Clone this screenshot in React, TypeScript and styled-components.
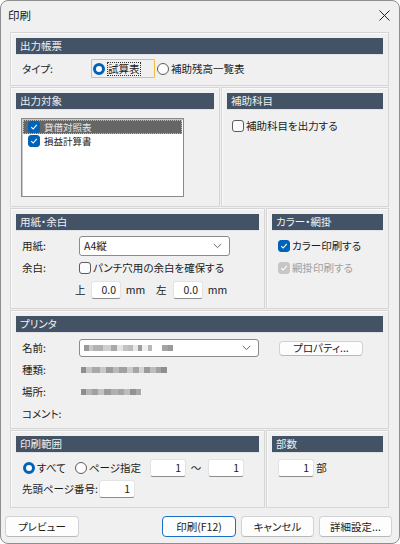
import React from "react";
import styled, { createGlobalStyle } from "styled-components";

const Global = createGlobalStyle`
  html, body { margin: 0; padding: 0; background: #ffffff; }
  body {
    font-family: "Noto Sans CJK JP", "Noto Sans", sans-serif;
    font-size: 10.5px;
    line-height: 14px;
    font-feature-settings: "palt";
    color: #1b1b1b;
  }
  * { box-sizing: border-box; }
`;

const Window = styled.div`
  width: 400px;
  height: 544px;
  border: 1px solid #8e8e8e;
  border-radius: 8px;
  background: #f0f0f0;
  display: flex;
  flex-direction: column;
  overflow: hidden;
`;

const TitleBar = styled.div`
  height: 31px;
  display: flex;
  align-items: center;
  justify-content: space-between;
  padding: 0 9px 3px 7px;
`;

const Title = styled.span`
  font-size: 11.5px;
`;

const Body = styled.div`
  display: flex;
  flex-direction: column;
  gap: 1px;
  padding: 0 10px 0 9px;
`;

const Row = styled.div<{ $cols: string }>`
  display: grid;
  grid-template-columns: ${(p) => p.$cols};
  gap: 1px;
`;

const Group = styled.div<{ $h: number }>`
  height: ${(p) => p.$h}px;
  border: 1px solid #d6d6d6;
  box-shadow: inset 1px 1px 0 #fafafa;
  padding: 5px 5px 0 5px;
  display: flex;
  flex-direction: column;
`;

const Header = styled.div`
  height: 17px;
  background: #435365;
  color: #eef0f2;
  display: flex;
  align-items: center;
  padding-left: 4px;
  border-bottom: 1px solid #dfe3e8;
`;

const Line = styled.div<{ $top?: number; $left?: number }>`
  display: flex;
  align-items: center;
  min-height: 15px;
  margin-top: ${(p) => p.$top ?? 0}px;
  padding-left: ${(p) => p.$left ?? 0}px;
`;

const Label = styled.span<{ $w?: number }>`
  width: ${(p) => (p.$w !== undefined ? `${p.$w}px` : "auto")};
  flex: none;
  white-space: nowrap;
`;

const RadioBox = styled.span<{ $on?: boolean }>`
  width: 12px;
  height: 12px;
  border-radius: 50%;
  flex: none;
  background: #fdfdfd;
  border: ${(p) => (p.$on ? "3.5px solid #0063b8" : "1px solid #5c5c5c")};
`;

const Choice = styled.label<{ $focus?: boolean; $w?: number }>`
  display: inline-flex;
  align-items: center;
  gap: 2px;
  flex: none;
  width: ${(p) => (p.$w !== undefined ? `${p.$w}px` : "auto")};
  height: 19px;
  padding: 0 1px;
  border: 1px solid ${(p) => (p.$focus ? "#f3bd45" : "transparent")};
  border-radius: 1px;
  white-space: nowrap;
`;

const FocusText = styled.span`
  outline: 1px dotted #333;
  outline-offset: -1px;
  padding: 0 1px;
`;

const CheckBox = styled.span<{ $on?: boolean; $disabled?: boolean }>`
  width: 12px;
  height: 12px;
  border-radius: 3px;
  flex: none;
  display: inline-flex;
  align-items: center;
  justify-content: center;
  background: ${(p) => (p.$disabled ? "#c6c6c6" : p.$on ? "#0063b8" : "#fbfbfb")};
  border: 1px solid ${(p) => (p.$disabled ? "#c6c6c6" : p.$on ? "#0063b8" : "#5c5c5c")};
`;

const Check = ({ on, disabled }: { on?: boolean; disabled?: boolean }) => (
  <CheckBox $on={on} $disabled={disabled}>
    {(on || disabled) && (
      <svg width="8" height="8" viewBox="0 0 8 8">
        <path d="M1.2 4.2 L3.2 6 L6.8 1.8" fill="none" stroke="#fff" strokeWidth="1.1" />
      </svg>
    )}
  </CheckBox>
);

const CheckLabel = styled.label<{ $disabled?: boolean }>`
  display: inline-flex;
  align-items: center;
  gap: 2px;
  color: ${(p) => (p.$disabled ? "#a0a0a0" : "inherit")};
  white-space: nowrap;
`;

const ListBox = styled.div`
  margin: 8px 0 0 5px;
  width: 163px;
  height: 79px;
  background: #fff;
  border: 1px solid #8a8a8a;
  box-shadow: inset 1px 1px 0 #c8c8c8;
  padding: 1px;
`;

const ListItem = styled.div<{ $sel?: boolean }>`
  height: 14px;
  line-height: 14px;
  font-size: 9.5px;
  display: flex;
  align-items: center;
  gap: 4px;
  padding-left: 5px;
  background: ${(p) => (p.$sel ? "#666666" : "transparent")};
  color: ${(p) => (p.$sel ? "#e6e6e6" : "inherit")};
  outline: ${(p) => (p.$sel ? "1px dotted #bbb" : "none")};
  outline-offset: -1px;
`;

const Select = styled.div<{ $w: number; $h: number }>`
  width: ${(p) => p.$w}px;
  height: ${(p) => p.$h}px;
  flex: none;
  background: #fff;
  border: 1px solid #8b8b8b;
  border-radius: 3px;
  display: flex;
  align-items: center;
  justify-content: space-between;
  padding: 0 7px 0 4px;
`;

const Chevron = () => (
  <svg width="9" height="6" viewBox="0 0 9 6">
    <path d="M0.8 1 L4.5 4.6 L8.2 1" fill="none" stroke="#666" strokeWidth="1" />
  </svg>
);

const NumField = styled.div<{ $w: number }>`
  width: ${(p) => p.$w}px;
  height: 18px;
  flex: none;
  background: #fff;
  border: 1px solid #e3e3e3;
  border-bottom: 1px solid #8d8d8d;
  border-radius: 3px;
  display: flex;
  align-items: center;
  justify-content: flex-end;
  padding-right: 4px;
`;

const Button = styled.button<{ $w: number; $primary?: boolean; $h?: number }>`
  width: ${(p) => p.$w}px;
  height: ${(p) => p.$h ?? 21}px;
  flex: none;
  font: inherit;
  color: #1b1b1b;
  background: #fdfdfd;
  border: 1px solid ${(p) => (p.$primary ? "#1b6fc2" : "#d2d2d2")};
  border-bottom-color: ${(p) => (p.$primary ? "#1b6fc2" : "#b8b8b8")};
  border-radius: 4px;
  padding: 0;
  display: inline-flex;
  align-items: center;
  justify-content: center;
`;

const Footer = styled.div`
  display: flex;
  align-items: center;
  padding: 8px 0 0 4px;
`;

const Spacer = styled.div`
  flex: 1;
`;

const ButtonGroup = styled.div`
  display: flex;
  gap: 5px;
  margin-right: 7px;
`;

const BlurLine = styled.div`
  display: flex;
  height: 6px;
  align-items: stretch;
`;

const Pix = styled.span<{ $w: number; $c: string }>`
  width: ${(p) => p.$w}px;
  background: ${(p) => p.$c};
  filter: blur(0.4px);
`;

const Blur = ({ cells }: { cells: [number, string][] }) => (
  <BlurLine>
    {cells.map(([w, c], i) => (
      <Pix key={i} $w={w} $c={c} />
    ))}
  </BlurLine>
);

const nameCells: [number, string][] = [
  [5, "#9a9a9a"], [4, "#c8c8c8"], [10, "#b2b2b2"], [8, "#cfcfcf"], [6, "#a8a8a8"], [6, "#e4e4e4"],
  [5, "#c2c2c2"], [5, "#bcbcbc"], [5, "#e8e8e8"], [4, "#9c9c9c"], [6, "#f0f0f0"], [4, "#b8b8b8"],
  [10, "#ffffff"], [6, "#a4a4a4"], [5, "#9a9a9a"],
];
const typeCells: [number, string][] = [
  [5, "#8e8e8e"], [6, "#c4c4c4"], [8, "#a9a9a9"], [6, "#c8c8c8"], [7, "#9c9c9c"], [6, "#b9b9b9"],
  [8, "#a0a0a0"], [6, "#cbcbcb"], [6, "#a5a5a5"], [5, "#d4d4d4"], [6, "#9a9a9a"], [6, "#bdbdbd"],
  [5, "#a2a2a2"], [6, "#8f8f8f"],
];
const placeCells: [number, string][] = [
  [5, "#8e8e8e"], [6, "#b5b5b5"], [6, "#a0a0a0"], [6, "#c2c2c2"], [7, "#9a9a9a"], [7, "#b0b0b0"],
  [6, "#a4a4a4"], [6, "#bdbdbd"], [6, "#929292"], [5, "#a8a8a8"],
];

export default function App() {
  return (
    <>
      <Global />
      <Window>
        <TitleBar>
          <Title>印刷</Title>
          <svg width="11" height="11" viewBox="0 0 11 11">
            <path d="M0.5 0.5 L10.5 10.5 M10.5 0.5 L0.5 10.5" stroke="#222" strokeWidth="1" />
          </svg>
        </TitleBar>
        <Body>
          <Group $h={54}>
            <Header>出力帳票</Header>
            <Line $top={4} $left={6}>
              <Label $w={69}>タイプ:</Label>
              <Choice $focus $w={64}>
                <RadioBox $on />
                <FocusText>試算表</FocusText>
              </Choice>
              <Choice>
                <RadioBox />
                <span>補助残高一覧表</span>
              </Choice>
            </Line>
          </Group>

          <Row $cols="210px 1fr">
            <Group $h={120}>
              <Header>出力対象</Header>
              <ListBox>
                <ListItem $sel>
                  <Check on />
                  <span>貸借対照表</span>
                </ListItem>
                <ListItem>
                  <Check on />
                  <span>損益計算書</span>
                </ListItem>
              </ListBox>
            </Group>
            <Group $h={120}>
              <Header>補助科目</Header>
              <Line $top={8} $left={5}>
                <CheckLabel>
                  <Check />
                  <span>補助科目を出力する</span>
                </CheckLabel>
              </Line>
            </Group>
          </Row>

          <Row $cols="255px 1fr">
            <Group $h={101}>
              <Header>用紙・余白</Header>
              <Line $top={5} $left={6}>
                <Label $w={57}>用紙:</Label>
                <Select $w={151} $h={20}>
                  <span>A4縦</span>
                  <Chevron />
                </Select>
              </Line>
              <Line $top={4} $left={6}>
                <Label $w={57}>余白:</Label>
                <CheckLabel>
                  <Check />
                  <span>パンチ穴用の余白を確保する</span>
                </CheckLabel>
              </Line>
              <Line $top={6} $left={59}>
                <Label $w={16}>上</Label>
                <NumField $w={30}>0.0</NumField>
                <Label $w={35}>&nbsp;&nbsp;mm</Label>
                <Label $w={17}>左</Label>
                <NumField $w={30}>0.0</NumField>
                <Label>&nbsp;&nbsp;mm</Label>
              </Line>
            </Group>
            <Group $h={101}>
              <Header>カラー・網掛</Header>
              <Line $top={7} $left={6}>
                <CheckLabel>
                  <Check on />
                  <span>カラー印刷する</span>
                </CheckLabel>
              </Line>
              <Line $top={7} $left={6}>
                <CheckLabel $disabled>
                  <Check disabled />
                  <span>網掛印刷する</span>
                </CheckLabel>
              </Line>
            </Group>
          </Row>

          <Group $h={119}>
            <Header>プリンタ</Header>
            <Line $top={6} $left={6}>
              <Label $w={57}>名前:</Label>
              <Select $w={180} $h={18}>
                <Blur cells={nameCells} />
                <Chevron />
              </Select>
              <Label $w={20} />
              <Button $w={84} $h={15}>プロパティ...</Button>
            </Line>
            <Line $top={5} $left={6}>
              <Label $w={59}>種類:</Label>
              <Blur cells={typeCells} />
            </Line>
            <Line $top={7} $left={6}>
              <Label $w={59}>場所:</Label>
              <Blur cells={placeCells} />
            </Line>
            <Line $top={7} $left={6}>
              <Label>コメント:</Label>
            </Line>
          </Group>

          <Row $cols="255px 1fr">
            <Group $h={78}>
              <Header>印刷範囲</Header>
              <Line $top={5} $left={5}>
                <Choice $w={52}>
                  <RadioBox $on />
                  <span>すべて</span>
                </Choice>
                <Choice $w={77}>
                  <RadioBox />
                  <span>ページ指定</span>
                </Choice>
                <NumField $w={36}>1</NumField>
                <Label $w={22}>&nbsp;&nbsp;～</Label>
                <NumField $w={36}>1</NumField>
              </Line>
              <Line $top={3} $left={6}>
                <Label $w={77}>先頭ページ番号:</Label>
                <NumField $w={36}>1</NumField>
              </Line>
            </Group>
            <Group $h={78}>
              <Header>部数</Header>
              <Line $top={6} $left={6}>
                <NumField $w={36}>1</NumField>
                <Label>&nbsp;部</Label>
              </Line>
            </Group>
          </Row>
        </Body>
        <Footer>
          <Button $w={74}>プレビュー</Button>
          <Spacer />
          <ButtonGroup>
            <Button $w={74} $primary>印刷(F12)</Button>
            <Button $w={73}>キャンセル</Button>
            <Button $w={73}>詳細設定...</Button>
          </ButtonGroup>
        </Footer>
      </Window>
    </>
  );
}
